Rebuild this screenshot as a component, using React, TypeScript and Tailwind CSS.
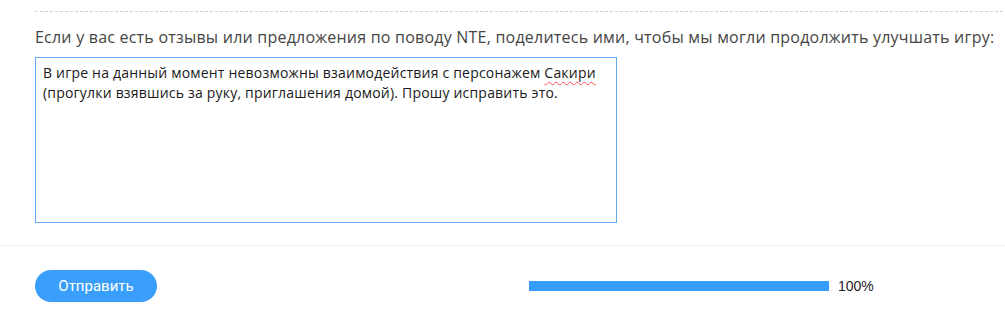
const App = () => {
  return (
    <div className="w-[1005px] h-[318px] bg-white overflow-hidden font-['Open_Sans',sans-serif]">
      <div className="pl-[35px] pr-[2px] pt-[11px] pb-[22px]">
        <div className="border-t border-dashed border-[#cfcfcf]" />
        <p className="mt-[13px] text-[16px] leading-[24px] tracking-[0.22px] text-[#454545]">
          Если у вас есть отзывы или предложения по поводу NTE, поделитесь ими, чтобы мы могли продолжить улучшать игру:
        </p>
        <div className="mt-[8px] w-[582px] h-[166px] border border-[#63abf6] bg-white pl-[7px] pt-[5px] text-[14px] leading-[20px] tracking-[0.2px] text-[#1a1a1a]">
          В игре на данный момент невозможны взаимодействия с персонажем{" "}
          <span className="underline decoration-wavy decoration-[#ff4d4d] decoration-1 underline-offset-[3px]">Сакири</span>
          <br />
          (прогулки взявшись за руку, приглашения домой). Прошу исправить это.
        </div>
      </div>
      <div className="border-t border-[#eeeeee]" />
      <div className="flex items-center pl-[35px] pt-[24px]">
        <button className="w-[122px] h-[32px] rounded-full bg-[#3a9ffc] text-white text-[15px] font-['Roboto',sans-serif]">
          Отправить
        </button>
        <div className="ml-[372px] flex items-center">
          <div className="w-[300px] h-[10px] bg-[#369cfd]" />
          <span className="ml-[9px] text-[14px] text-[#222] font-['Liberation_Sans',sans-serif]">100%</span>
        </div>
      </div>
    </div>
  );
};

export default App;
